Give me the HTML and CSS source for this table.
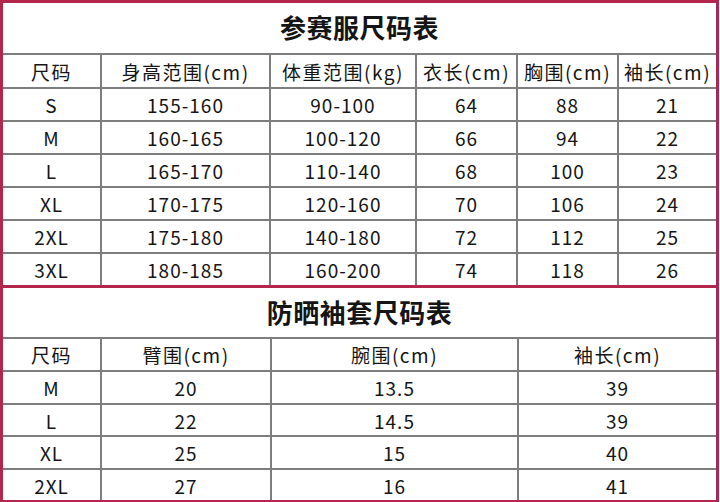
FILE: index.html
```html
<!DOCTYPE html>
<html lang="zh-CN">
<head>
<meta charset="utf-8">
<link rel="stylesheet" href="styles.css">
</head>
<body>
<div class="sheet">
  <div class="grid top">
    <div class="title">参赛服尺码表</div>
    <div class="c h">尺码</div><div class="c h">身高范围(cm)</div><div class="c h">体重范围(kg)</div><div class="c h">衣长(cm)</div><div class="c h">胸围(cm)</div><div class="c h">袖长(cm)</div>
    <div class="c">S</div><div class="c">155-160</div><div class="c">90-100</div><div class="c">64</div><div class="c">88</div><div class="c">21</div>
    <div class="c">M</div><div class="c">160-165</div><div class="c">100-120</div><div class="c">66</div><div class="c">94</div><div class="c">22</div>
    <div class="c">L</div><div class="c">165-170</div><div class="c">110-140</div><div class="c">68</div><div class="c">100</div><div class="c">23</div>
    <div class="c">XL</div><div class="c">170-175</div><div class="c">120-160</div><div class="c">70</div><div class="c">106</div><div class="c">24</div>
    <div class="c">2XL</div><div class="c">175-180</div><div class="c">140-180</div><div class="c">72</div><div class="c">112</div><div class="c">25</div>
    <div class="c">3XL</div><div class="c">180-185</div><div class="c">160-200</div><div class="c">74</div><div class="c">118</div><div class="c">26</div>
  </div>
  <div class="grid bottom">
    <div class="title">防晒袖套尺码表</div>
    <div class="c h">尺码</div><div class="c h">臂围(cm)</div><div class="c h">腕围(cm)</div><div class="c h">袖长(cm)</div>
    <div class="c">M</div><div class="c">20</div><div class="c">13.5</div><div class="c">39</div>
    <div class="c">L</div><div class="c">22</div><div class="c">14.5</div><div class="c">39</div>
    <div class="c">XL</div><div class="c">25</div><div class="c">15</div><div class="c">40</div>
    <div class="c">2XL</div><div class="c">27</div><div class="c">16</div><div class="c">41</div>
  </div>
</div>
</body>
</html>
```

FILE: styles.css
```css
html, body {
  margin: 0;
  padding: 0;
  background: #ffffff;
}
body {
  width: 720px;
  height: 502px;
  overflow: hidden;
  font-family: "Noto Sans CJK SC", "Noto Sans", sans-serif;
  color: #151515;
}
.sheet {
  width: 713px;
  border: 3px solid #b3274c;
  border-right-color: #a42a52;
}
.grid {
  display: grid;
  gap: 2px;
  background: #7e7e7e;
}
.top {
  grid-template-columns: 97px 167px 144px 99px 99px 97px;
  grid-template-rows: 50px 32px repeat(6, 31px);
}
.bottom {
  border-top: 3px solid #b3274c;
  grid-template-columns: 97px 168px 245px 197px;
  grid-template-rows: 49px 31px 31px 30px 31px 30px;
}
.title {
  grid-column: 1 / -1;
  background: #ffffff;
  display: flex;
  align-items: center;
  justify-content: center;
  font-size: 26px;
  font-weight: bold;
  letter-spacing: 0.5px;
  padding-bottom: 3px;
}
.c {
  background: #ffffff;
  display: flex;
  align-items: center;
  justify-content: center;
  font-size: 19px;
  letter-spacing: 1px;
}
.h {
  letter-spacing: 1.5px;
}
```
